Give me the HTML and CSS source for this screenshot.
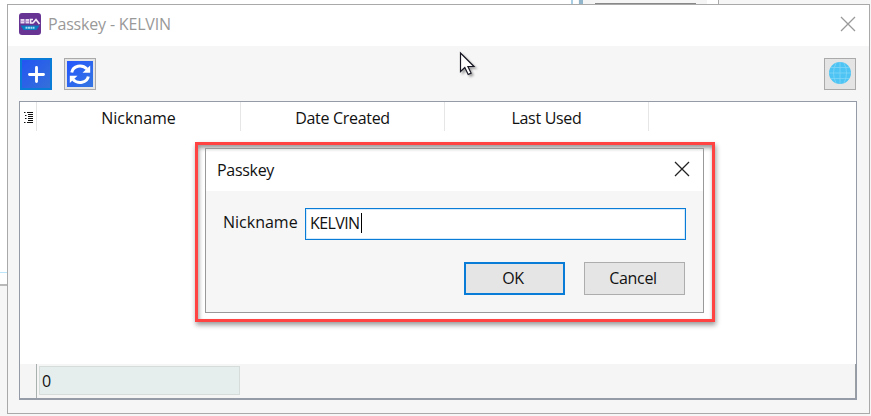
FILE: index.html
```html
<!DOCTYPE html>
<html lang="en">
<head>
<meta charset="utf-8">
<title>Passkey - KELVIN</title>
<link rel="stylesheet" href="styles.css">
</head>
<body>
<div class="backdrop-left"></div>
<div class="backdrop-top"><i class="tab-edge"></i><i class="tab-line"></i></div>
<main class="window">
  <header class="titlebar">
    <svg class="app-icon" width="22" height="22" viewBox="0 0 22 22">
      <rect width="22" height="22" rx="3" fill="#673494"/>
      <path d="M1.500 6h4v4.500h-4zM6.500 6h3.500v4.500H6.500z" fill="#e7d9f1"/>
      <path d="M2 8.300h8" stroke="#b493cd" stroke-width=".8"/>
      <path d="M14 6.500h-2.500v3.500H14M14 10l3-3.500 3.500 4.500" fill="none" stroke="#f3eaf8" stroke-width="1.700"/>
      <path d="M1.500 12.500h19L17.500 17h-13z" fill="#087dbf"/>
      <path d="M6.500 14.700h9" stroke="#a4dcf5" stroke-width="2" stroke-dasharray="2 .5"/>
    </svg>
    <h1 class="title"><span class="t-main">Passkey - KELVIN</span></h1>
    <svg class="close muted" width="16" height="16" viewBox="0 0 16 16"><path d="M1 1l14 14M15 1L1 15"/></svg>
  </header>
  <div class="toolbar">
    <button class="tool add" aria-label="Add"><svg width="32" height="32" viewBox="0 0 32 32"><path d="M16.500 9.500v14M9.500 16.500h14" stroke="#fff" stroke-width="2.900" stroke-linecap="round"/></svg></button>
    <button class="tool refresh" aria-label="Refresh"><svg width="26" height="26" viewBox="0 0 26 26">
      <path d="M4.700 11.500C6 4.500 15 3 20 8M21.300 15.500C20 22 11 23.500 6 18.500" fill="none" stroke="#fff" stroke-width="3"/>
      <path d="M23.200 4.500v7.300h-7.700zM2.800 22v-7.300h7.700z" fill="#fff"/></svg></button>
    <button class="tool web" aria-label="Web"><svg width="22" height="22" viewBox="0 0 22 22">
      <circle cx="11" cy="11" r="11" fill="#4dc4f3"/>
      <path d="M11 0v22M0 11h22M2 5.500h18M2 16.500h18M7 1Q2 11 7 21M15 1Q20 11 15 21" fill="none" stroke="#80d6f8" stroke-width=".8"/></svg></button>
  </div>
  <section class="grid">
    <div class="head">
      <div class="corner"><svg width="10" height="13" viewBox="0 0 10 13"><path d="M0 1.500h1.500M1 4.500h1.500M1 7.500h1.500M0 11.500h1.500M3 1.500h6M4 3.500h5M4 5.500h5M4 7.500h5M4 9.500h5M3 11.500h6" stroke="#111" stroke-width="1"/></svg></div>
      <div class="col"><span class="t-nick">Nickname</span></div>
      <div class="col"><span class="t-date">Date Created</span></div>
      <div class="col"><span class="t-last">Last Used</span></div>
    </div>
    <div class="rows"></div>
    <div class="foot"><div class="foot-corner"></div><div class="count">0</div></div>
  </section>
</main>
<div class="highlight">
  <section class="dialog">
    <header class="dialog-title"><span class="t-pass">Passkey</span>
      <svg class="close" width="16" height="16" viewBox="0 0 16 16"><path d="M1 1l14 14M15 1L1 15"/></svg>
    </header>
    <div class="field"><label class="t-label">Nickname</label><div class="input"><span class="t-value">KELVIN</span><i class="caret"></i></div></div>
    <div class="actions"><button class="btn primary"><span class="t-ok">OK</span></button><button class="btn"><span class="t-cancel">Cancel</span></button></div>
  </section>
</div>
<svg class="pointer" width="22" height="28" viewBox="0 0 22 28"><path d="M1.500 2v18.500l4.300-4 3.400 7 2.900-1.400-3.200-6.600H15z" fill="#fff" stroke="#171724" stroke-width="1.200"/></svg>
</body>
</html>
```
FILE: styles.css
```css
* { box-sizing: border-box; }
body { margin: 0; width: 871px; height: 416px; overflow: hidden; position: relative; padding: 4px 1px 2px 7px; background: #f6f6f6; color: #111; font: 16px/22px "Open Sans", "Noto Sans", sans-serif; }
button { font: inherit; color: inherit; padding: 0; margin: 0; }
span, label { white-space: nowrap; }
.backdrop-left { position: absolute; left: 0; top: 0; width: 7px; height: 286px; background: linear-gradient(#fff 272px, #bde6fa 272px, #bde6fa 273px, #fff 273px, #fff 284px, #b9b9b9 284px); }
.backdrop-top { position: absolute; left: 0; top: 0; width: 719px; height: 4px; background: linear-gradient(90deg, #fff 578px, #f5f5f5 578px, #f5f5f5 707px, #fff 707px); border-right: 1px solid #aaa; }
.tab-edge { position: absolute; left: 571px; top: 0; width: 12px; height: 4px; border-left: 2px solid #a9cde2; border-right: 4px solid #91b6cb; }
.tab-line { position: absolute; left: 595px; top: 3px; width: 101px; height: 1px; background: #888; }
.window { position: relative; height: 410px; display: flex; flex-direction: column; background: #f6f6f6; border: 1px solid #a9a9a9; }
.titlebar { height: 41px; flex: none; display: flex; align-items: center; background: #fff; padding: 0 13px 3px 11px; }
.app-icon { margin-top: -1px; }
.title { margin: 0 auto 0 7px; font: inherit; color: #999; }
.close { fill: none; stroke: #222; stroke-width: 1.300; }
.muted { stroke: #999; }
.toolbar { height: 55px; flex: none; display: flex; padding: 12px 13px 0 12px; gap: 12px; }
.tool { width: 32px; height: 32px; border: 1px solid #aaa; display: flex; align-items: center; justify-content: center; }
.tool svg { flex: none; }
.add { border: 2px solid #087cd7; background: linear-gradient(135deg, #2455f3, #3470d9); }
.refresh { background: linear-gradient(135deg, #2254ff, #3778df); border: 1px solid #aaa; box-shadow: inset 0 0 0 2px #e5e5e5; }
.web { margin-left: auto; background: #e4e4e4; border-color: #aaa; padding-bottom: 2px; }
.grid { height: 299px; margin: 0 12px 0 11px; border: 1px solid #969ca7; border-bottom-width: 2px; background: #fff; display: flex; flex-direction: column; }
.head { display: flex; height: 29px; }
.corner { width: 17px; border-right: 1px solid #e4e4e4; padding: 9px 0 0 4px; }
.corner svg { display: block; }
.col { width: 204px; border-right: 1px solid #e6e6e6; display: flex; justify-content: center; align-items: center; padding-top: 2px; }
.rows { flex: 1; }
.foot { height: 34px; background: #f5f5f5; display: flex; border-right: 1px solid #9a9fa3; }
.foot-corner { width: 17px; border-right: 1px solid #a9b0af; }
.count { width: 201px; height: 29px; margin: 2px 0 0 2px; padding: 3px 2px; border: 1px solid #d6dcda; background: #e6eeed; }
.highlight { position: absolute; left: 195px; top: 142px; width: 520px; height: 180px; border: 3px solid #ff4343; padding: 3px 8px 6px 7px; background: #fff; box-shadow: 1px 3px 5px #0006, inset 1px 3px 4px #0006; }
.dialog { height: 165px; border: 1px solid #999; background: #f6f6f6; }
.dialog-title { height: 42px; background: linear-gradient(#e5e5e5, #fff 3px); display: flex; align-items: center; justify-content: space-between; padding: 0 13px 1px 11px; }
.dialog-title .close { margin-top: -2px; }
.field { display: flex; align-items: center; justify-content: space-between; margin: 17px 17px 0 17px; }
.t-label { margin-top: -4px; }
.input { width: 381px; height: 32px; border: 1px solid #087cd7; box-shadow: inset 0 0 0 1px #d5eafa; background: #fff; display: flex; align-items: center; padding-left: 4px; padding-bottom: 2px; }
.caret { width: 1px; height: 20px; background: #000; margin-left: 1px; }
.actions { display: flex; justify-content: flex-end; gap: 19px; margin: 22px 18px 0 0; }
.btn { width: 101px; height: 33px; border: 1px solid #adadad; background: #e5e5e5; display: flex; align-items: center; justify-content: center; padding: 0 3px 1px 0; }
.primary { border: 2px solid #087cd7; }
.t-main { letter-spacing: -.18px; }
.t-nick { letter-spacing: 0; }
.t-label { letter-spacing: 0; }
.t-date, .t-last { letter-spacing: -.3px; }
.t-pass, .t-ok, .t-cancel { letter-spacing: -.3px; }
.t-value { letter-spacing: -.6px; }
.pointer { position: absolute; left: 459px; top: 51px; filter: drop-shadow(2px 2px 1px #0005); }
```
